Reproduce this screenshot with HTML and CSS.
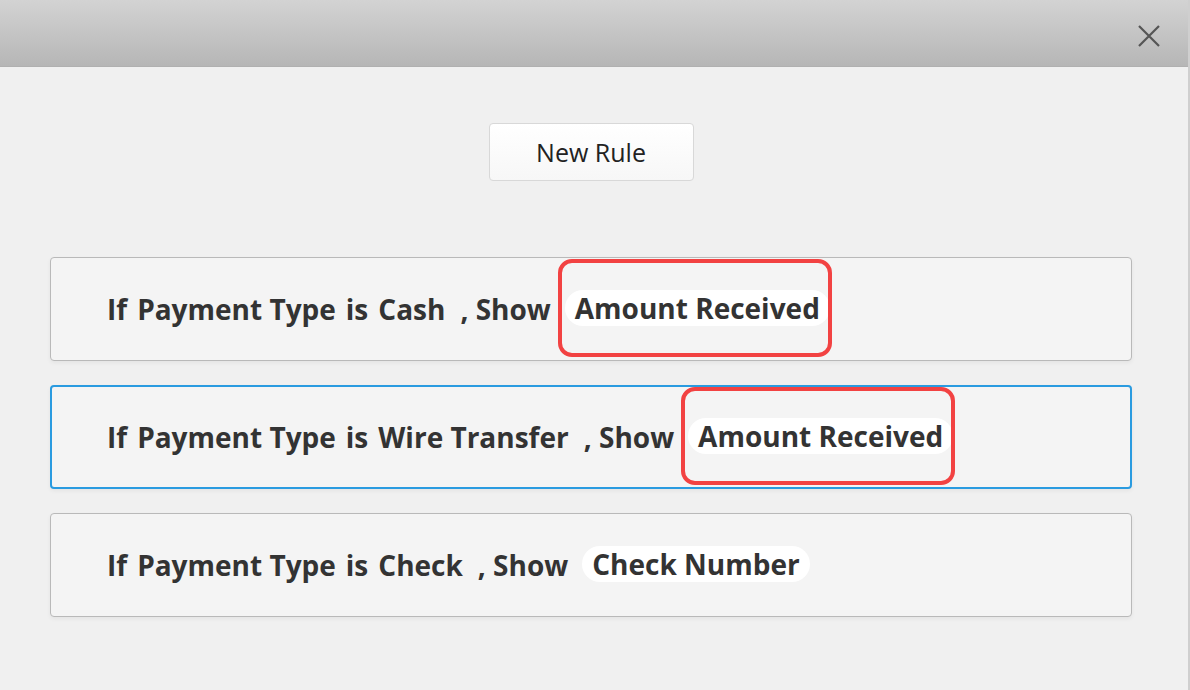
FILE: index.html
```html
<!DOCTYPE html>
<html lang="en">
<head>
  <meta charset="UTF-8" />
  <title>Display Rules</title>
  <link rel="stylesheet" href="styles.css">
</head>
<body>
  <div class="dialog">
    <div class="titlebar">
      <button class="close" aria-label="Close">
        <svg width="24" height="24" viewBox="0 0 24 24"><path d="M2 2 L22 22 M22 2 L2 22" stroke="#555" stroke-width="2.2" fill="none"/></svg>
      </button>
    </div>

    <div class="content">
      <div class="actions">
        <button class="new-rule">New Rule</button>
      </div>

      <div class="rule">
        <span>If</span><span>Payment Type</span><span>is</span><span>Cash</span><span class="sep">, Show</span>
        <span class="chip marked">Amount Received</span>
      </div>

      <div class="rule active">
        <span>If</span><span>Payment Type</span><span>is</span><span>Wire Transfer</span><span class="sep">, Show</span>
        <span class="chip marked">Amount Received</span>
      </div>

      <div class="rule">
        <span>If</span><span>Payment Type</span><span>is</span><span>Check</span><span class="sep">, Show</span>
        <span class="chip">Check Number</span>
      </div>
    </div>
  </div>
</body>
</html>
```

FILE: styles.css
```css
html, body { margin: 0; padding: 0; }
body { background: #f0f0f0; font-family: "Open Sans", "Noto Sans", sans-serif; color: #333; }
.dialog { width: 1188px; height: 690px; border-right: 2px solid #cfcfcf; box-sizing: content-box; }
.titlebar { height: 66px; background: linear-gradient(#d3d3d3, #b6b6b6); border-bottom: 1px solid #b0b0b0; display: flex; align-items: center; justify-content: flex-end; padding-right: 27px; }
.close { background: none; border: none; padding: 0; width: 24px; height: 24px; margin-top: 6px; cursor: pointer; }
.close svg { display: block; }
.content { padding: 0 56px 0 50px; }
.actions { display: flex; justify-content: center; padding-top: 56px; margin-bottom: 76px; }
.new-rule { width: 205px; height: 58px; font-family: inherit; font-size: 25px; color: #222; background: linear-gradient(#ffffff, #f7f7f7); border: 1px solid #d8d8d8; border-radius: 4px; cursor: pointer; }
.rule { height: 102px; margin-bottom: 24px; background: #f4f4f4; border: 1px solid #b9b9b9; border-radius: 4px; box-shadow: 0 2px 4px rgba(0,0,0,0.05); display: flex; align-items: center; padding-left: 56px; font-weight: 700; font-size: 28px; gap: 10px; }
.rule.active { border: 2px solid #2a9be0; height: 100px; padding-left: 55px; }
.rule .sep { margin-left: 5px; }
.chip { position: relative; background: #fff; border-radius: 18px; padding: 0 10px; height: 36px; line-height: 36px; margin-left: 4px; margin-top: -2px; }
.marked::after { content: ""; position: absolute; top: -31px; bottom: -31px; left: -7px; right: -2px; border: 4px solid #f24242; border-radius: 14px; }
```
